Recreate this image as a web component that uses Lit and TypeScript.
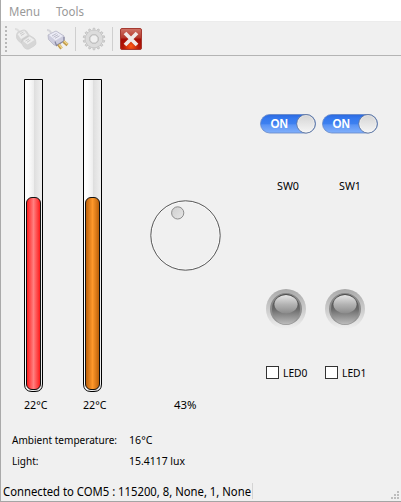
import { LitElement, html, svg, css } from "lit";
import { customElement, property } from "lit/decorators.js";

/** One line of text set to a fixed measure, baseline 11px below its top. */
@customElement("ui-label")
class UiLabel extends LitElement {
  @property() text = "";
  @property({ type: Number }) measure = 20;
  @property({ type: Number }) size = 11;
  static styles = css`
    :host { display: block; height: 14px; flex: none; }
    svg { display: block; overflow: visible; }
    text { font-family: "Noto Sans", "Open Sans", sans-serif; fill: var(--ink, #000); }
  `;
  render() {
    return html`<svg width=${this.measure} height="14">
      <text x="0" y="11" font-size=${this.size} textLength=${this.measure} lengthAdjust="spacingAndGlyphs">${this.text}</text>
    </svg>`;
  }
}

@customElement("ui-thermo")
class UiThermo extends LitElement {
  @property() tone = "red";
  static styles = css`:host, svg { display: block; }`;
  render() {
    const [edge, mid] = this.tone === "red" ? ["#ff1414", "#ff8080"] : ["#b75d08", "#ff982a"];
    return html`<svg width="19" height="313" viewBox="0 0 19 313">
      <defs>
        <linearGradient id="glass">
          <stop offset="0" stop-color="#fff" /><stop offset=".22" stop-color="#fdfdfd" />
          <stop offset=".52" stop-color="#eee" /><stop offset=".53" stop-color="#dedede" />
          <stop offset=".8" stop-color="#e9e9e9" /><stop offset="1" stop-color="#f0f0f0" />
        </linearGradient>
        <linearGradient id="fluid">
          <stop offset="0" stop-color=${edge} /><stop offset=".5" stop-color=${mid} /><stop offset="1" stop-color=${edge} />
        </linearGradient>
      </defs>
      <path d="M.5 .5H18.5V305Q18.5 312.5 11 312.5H8Q.5 312.5 .5 305Z" fill="url(#glass)" stroke="#000" />
      <rect x="2.5" y="118.5" width="14" height="192" rx="5.5" fill="url(#fluid)" stroke="#111" />
    </svg>`;
  }
}

@customElement("ui-dial")
class UiDial extends LitElement {
  static styles = css`:host, svg { display: block; }`;
  render() {
    return html`<svg width="71" height="71" viewBox="0 0 71 71">
      <defs><linearGradient id="k" x2="1" y2="1"><stop stop-color="#cecece" /><stop offset="1" stop-color="#e6e6e6" /></linearGradient></defs>
      <circle cx="35.5" cy="35.5" r="33.8" fill="#f0f0f0" stroke="#fafafa" />
      <circle cx="35.5" cy="35.5" r="34.7" fill="none" stroke="#444" stroke-width=".9" />
      <circle cx="27.7" cy="12.9" r="6.1" fill="url(#k)" stroke="#8c8c8c" />
    </svg>`;
  }
}

@customElement("ui-switch")
class UiSwitch extends LitElement {
  static styles = css`
    :host, svg { display: block; }
    text { font: bold 12px "Liberation Sans", sans-serif; fill: #fff; }
  `;
  render() {
    return html`<svg width="56" height="20" viewBox="0 0 56 20">
      <defs>
        <linearGradient id="b" x2="0" y2="1"><stop stop-color="#2b68de" /><stop offset=".2" stop-color="#3478ee" /><stop offset=".5" stop-color="#3d80f0" /><stop offset=".56" stop-color="#5893f5" /><stop offset="1" stop-color="#82b0fb" /></linearGradient>
        <linearGradient id="n" x2="0" y2="1"><stop stop-color="#d4d4d4" /><stop offset="1" stop-color="#f6f6f6" /></linearGradient>
      </defs>
      <rect x=".5" y=".5" width="55" height="18.5" rx="9.25" fill="url(#b)" stroke="#6387c6" stroke-width=".8" />
      <text x="10.5" y="14" textLength="17.5" lengthAdjust="spacingAndGlyphs">ON</text>
      <circle cx="46" cy="9.8" r="9.2" fill="url(#n)" stroke="#5f7397" stroke-width=".9" />
      <circle cx="46" cy="9.8" r="8.4" fill="none" stroke="#fff" stroke-opacity=".6" stroke-width=".6" />
    </svg>`;
  }
}

@customElement("ui-led")
class UiLed extends LitElement {
  static styles = css`:host, svg { display: block; }`;
  render() {
    return html`<svg width="40" height="40" viewBox="0 0 40 40">
      <defs>
        <linearGradient id="rim" x2="0" y2="1"><stop stop-color="#aaa" /><stop offset=".55" stop-color="#cecece" /><stop offset="1" stop-color="#f0f0f0" /></linearGradient>
        <linearGradient id="ring" x2="0" y2="1"><stop stop-color="#848484" /><stop offset="1" stop-color="#979797" /></linearGradient>
        <linearGradient id="lens" x2="0" y2="1"><stop stop-color="#3a3a3a" /><stop offset=".5" stop-color="#6b6b6b" /><stop offset="1" stop-color="#bcbcbc" /></linearGradient>
        <linearGradient id="shine" x2="0" y2="1"><stop stop-color="#e6e6e6" /><stop offset=".5" stop-color="#b4b4b4" /><stop offset="1" stop-color="#8c8c8c" /></linearGradient>
      </defs>
      <circle cx="20" cy="20" r="20" fill="url(#rim)" />
      <circle cx="20" cy="20" r="16" fill="url(#ring)" />
      <ellipse cx="20" cy="20.3" rx="14" ry="15" fill="url(#lens)" />
      <ellipse cx="20" cy="15.2" rx="11.6" ry="9.2" fill="url(#shine)" />
    </svg>`;
  }
}

const gearTeeth = Array.from({ length: 14 }, (_, i) => (i * 360) / 14);

@customElement("app-root")
class AppRoot extends LitElement {
  static styles = css`
    :host {
      display: flex; flex-direction: column; box-sizing: border-box;
      width: 401px; height: 502px; overflow: hidden;
      background: #f0f0f0; border-left: 1px solid #aaa; border-bottom: 1px solid #a5a5a5;
    }
    svg { display: block; flex: none; }
    .menu { display: flex; gap: 16px; height: 21px; padding: 5px 0 0 8px; box-sizing: border-box; background: #fff; --ink: #999; }
    .tools { display: flex; align-items: center; height: 35px; box-sizing: border-box; border-top: 1px solid #ececec; border-bottom: 1px solid #b4b4b4; padding-left: 4px; }
    .grip { width: 2px; height: 26px; background: repeating-linear-gradient(#b8b8b8 0 2px, transparent 2px 4px); margin-right: 7px; }
    .sep { width: 1px; height: 24px; background: #cfcfcf; }
    .cable { margin-right: 8px; }
    .plug { margin-right: 5px; }
    .gear { margin: 0 6px; }
    .close { margin-left: 7px; }
    .main { display: flex; height: 376px; box-sizing: border-box; padding: 23px 0 0 23px; }
    .col { display: flex; flex-direction: column; flex: none; }
    .heat { width: 59px; gap: 6px; }
    .knob { width: 77px; padding: 121px 0 0 8px; gap: 127px; }
    .knob ui-label { margin-left: 24px; }
    .io { padding: 35px 0 0 33px; }
    .row { display: flex; }
    .switches { gap: 6px; }
    .names { gap: 40px; margin: 45px 0 0 16.5px; }
    .leds { gap: 19px; margin: 96px 0 0 6px; }
    .checks { margin: 37px 0 0 6px; }
    .check { display: flex; gap: 4px; width: 59px; }
    .box { width: 13px; height: 13px; box-sizing: border-box; border: 1px solid #333; background: #fff; }
    .facts { display: grid; grid-template-columns: 116.5px auto; grid-auto-rows: 21px; padding: 1px 0 0 11px; height: 50px; box-sizing: border-box; }
    .status { display: flex; flex: 1; padding-left: 2px; }
    .status ui-label { margin-top: 3px; }
    .divider { width: 1px; height: 16px; margin: 1px 0 0 1px; background: #d4d4d4; }
    .size { margin: 9px 2px 0 auto; }
  `;

  render() {
    return html`
      <div class="menu">
        <ui-label text="Menu" measure="31" size="12"></ui-label>
        <ui-label text="Tools" measure="28" size="12"></ui-label>
      </div>
      <div class="tools">
        <div class="grip"></div>
        <svg class="cable" width="24" height="24" viewBox="0 0 24 24">
          <path d="M1 2Q4 2 5 5" fill="none" stroke="#dedede" stroke-width="2" />
          <path d="M2.5 8Q2.5 5.5 5 4.5L9 3Q11 2.5 12.5 4L15 8L20 11Q22 12.5 22 16Q22 18 20 19L15 22Q12.5 23 10 20.5L8 17L4 13.5Q2 11.5 2.5 8Z" fill="#d6d6d6" stroke="#cfcfcf" stroke-width=".7" />
          <path d="M3.5 7L10 3.5L13.5 8L7 12ZM9 14L15.5 9.5L20.5 13L13.5 17.5Z" fill="#ededed" />
          <path d="M7.5 15.5L8.5 12.5L14.5 9" fill="none" stroke="#c8c8c8" />
          <path d="M6 7L9.5 5M7 8.5L10.5 6.5M11.5 14L15 12M13 15.3L16.5 13" stroke="#cbcbcb" />
        </svg>
        <svg class="plug" width="24" height="24" viewBox="0 0 24 24">
          <path d="M1 3Q4 3 5 6" fill="none" stroke="#d5d5da" stroke-width="2" />
          <path d="M2 8L10 4L18 9L18 14L11 18.500L8 18L2.500 12.500Z" fill="#cdcdde" stroke="#b4b4c4" stroke-width=".8" />
          <path d="M3 8L10 4.500L17 9L9.500 13.500Z" fill="#ececf6" />
          <path d="M6 9L10.500 6.500M7.500 10.200L12 7.700M9 11.300L13.500 8.800" stroke="#b5b5c4" stroke-width=".9" />
          <path d="M9 14.500L10.500 18.500L18 14V10" fill="none" stroke="#85859f" stroke-width="1.200" />
          <path d="M12.500 17.500L15.500 21.500M17.500 14.500L21.500 18" stroke="#c09a48" stroke-width="3" />
          <path d="M13 17.500L16 21M18 14L21.500 17.300" stroke="#efd58c" stroke-width="1.300" />
        </svg>
        <div class="sep"></div>
        <svg class="gear" width="24" height="24" viewBox="0 0 24 24">
          ${gearTeeth.map((a) => svg`<path d="M10.700 4L11.200 1.200H12.800L13.300 4Z" fill="#d8d8d8" stroke="#bbb" stroke-width=".7" transform="rotate(${a} 12 12)" />`)}
          <circle cx="12" cy="12" r="6.6" fill="none" stroke="#c2c2c2" stroke-width="4.4" />
          <circle cx="12" cy="12" r="6.7" fill="none" stroke="#dcdcdc" stroke-width="3.6" />
          <circle cx="12" cy="12" r="4.2" fill="#f0f0f0" stroke="#b2b2b2" stroke-width=".9" />
        </svg>
        <div class="sep"></div>
        <svg class="close" width="22" height="22" viewBox="0 0 22 22">
          <defs>
            <linearGradient id="r" x2="0" y2="1"><stop stop-color="#cf7468" /><stop offset=".45" stop-color="#b5372a" /><stop offset=".5" stop-color="#a30d06" /><stop offset="1" stop-color="#b81a08" /></linearGradient>
            <radialGradient id="glow" cy=".85" r=".4"><stop stop-color="#ff5a14" /><stop offset="1" stop-color="#ff5a14" stop-opacity="0" /></radialGradient>
          </defs>
          <rect x=".5" y=".5" width="21" height="21" rx="1.5" fill="url(#r)" stroke="#a53a31" />
          <rect x="1" y="1" width="20" height="20" fill="url(#glow)" />
          <path d="M5 5L17 17M17 5L5 17" stroke="#f0e9e7" stroke-width="3.8" />
        </svg>
      </div>
      <div class="main">
        <div class="col heat"><ui-thermo></ui-thermo><ui-label text="22°C" measure="23.5"></ui-label></div>
        <div class="col heat"><ui-thermo tone="orange"></ui-thermo><ui-label text="22°C" measure="23.5"></ui-label></div>
        <div class="col knob"><ui-dial></ui-dial><ui-label text="43%" measure="22.5"></ui-label></div>
        <div class="col io">
          <div class="row switches"><ui-switch></ui-switch><ui-switch></ui-switch></div>
          <div class="row names"><ui-label text="SW0" measure="22"></ui-label><ui-label text="SW1" measure="22"></ui-label></div>
          <div class="row leds"><ui-led></ui-led><ui-led></ui-led></div>
          <div class="row checks">
            <div class="check"><div class="box"></div><ui-label text="LED0" measure="24.5"></ui-label></div>
            <div class="check"><div class="box"></div><ui-label text="LED1" measure="24.5"></ui-label></div>
          </div>
        </div>
      </div>
      <div class="facts">
        <ui-label text="Ambient temperature:" measure="105"></ui-label><ui-label text="16°C" measure="23.5"></ui-label>
        <ui-label text="Light:" measure="26.5"></ui-label><ui-label text="15.4117 lux" measure="56"></ui-label>
      </div>
      <div class="status">
        <ui-label text="Connected to COM5 : 115200, 8, None, 1, None" measure="248" size="12"></ui-label>
        <div class="divider"></div>
        <svg class="size" width="8" height="8" viewBox="0 0 8 8"><path d="M6 0h2v2H6zM3 3h2v2H3zM6 3h2v2H6zM0 6h2v2H0zM3 6h2v2H3zM6 6h2v2H6z" fill="#bdbdbd" /></svg>
      </div>
    `;
  }
}
